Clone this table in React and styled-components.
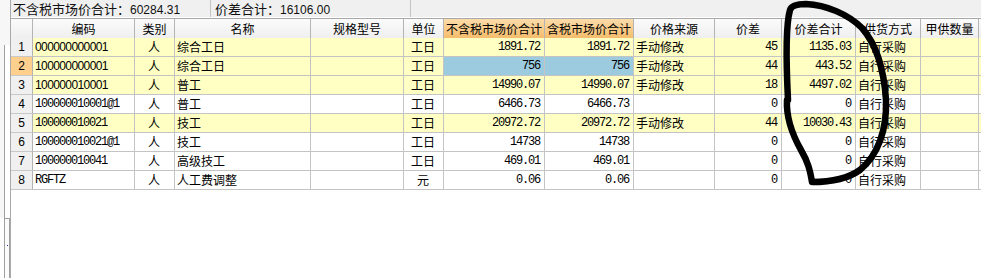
import styled, { createGlobalStyle, css } from "styled-components";

const GlobalStyle = createGlobalStyle`
  html, body {
    margin: 0;
    padding: 0;
    background: #ffffff;
  }
  body {
    font-family: "Noto Sans CJK SC", "Liberation Sans", sans-serif;
    font-size: 12px;
    color: #000;
  }
`;

const columns = [
  { key: "code", title: "编码", width: 102, align: "left" },
  { key: "kind", title: "类别", width: 40, align: "center" },
  { key: "name", title: "名称", width: 136, align: "left" },
  { key: "spec", title: "规格型号", width: 93, align: "left" },
  { key: "unit", title: "单位", width: 40, align: "center" },
  { key: "ex", title: "不含税市场价合计", width: 101, align: "right", num: true, accent: true },
  { key: "inc", title: "含税市场价合计", width: 89, align: "right", num: true, accent: true },
  { key: "src", title: "价格来源", width: 81, align: "left" },
  { key: "diff", title: "价差", width: 67, align: "right", num: true },
  { key: "diffSum", title: "价差合计", width: 74, align: "right", num: true },
  { key: "supply", title: "供货方式", width: 65, align: "left" },
  { key: "qty", title: "甲供数量", width: 58, align: "left" },
  { key: "rest", title: "", width: 40, align: "left" },
];

const rows = [
  { no: 1, code: "000000000001", sans: true, kind: "人", name: "综合工日", unit: "工日", ex: "1891.72", inc: "1891.72", src: "手动修改", diff: "45", diffSum: "1135.03", supply: "自行采购", hl: true },
  { no: 2, code: "100000000001", sans: true, kind: "人", name: "综合工日", unit: "工日", ex: "756", inc: "756", src: "手动修改", diff: "44", diffSum: "443.52", supply: "自行采购", hl: true, selected: true },
  { no: 3, code: "100000010001", sans: true, kind: "人", name: "普工", unit: "工日", ex: "14990.07", inc: "14990.07", src: "手动修改", diff: "18", diffSum: "4497.02", supply: "自行采购", hl: true },
  { no: 4, code: "100000010001@1", kind: "人", name: "普工", unit: "工日", ex: "6466.73", inc: "6466.73", src: "", diff: "0", diffSum: "0", supply: "自行采购" },
  { no: 5, code: "100000010021", kind: "人", name: "技工", unit: "工日", ex: "20972.72", inc: "20972.72", src: "手动修改", diff: "44", diffSum: "10030.43", supply: "自行采购", hl: true },
  { no: 6, code: "100000010021@1", kind: "人", name: "技工", unit: "工日", ex: "14738", inc: "14738", src: "", diff: "0", diffSum: "0", supply: "自行采购" },
  { no: 7, code: "100000010041", kind: "人", name: "高级技工", unit: "工日", ex: "469.01", inc: "469.01", src: "", diff: "0", diffSum: "0", supply: "自行采购" },
  { no: 8, code: "RGFTZ", kind: "人", name: "人工费调整", unit: "元", ex: "0.06", inc: "0.06", src: "", diff: "0", diffSum: "0", supply: "自行采购" },
];

const template = `22px ${columns.map((c) => `${c.width}px`).join(" ")}`;

const Page = styled.div`
  position: relative;
  width: 981px;
  height: 278px;
  overflow: hidden;
  display: flex;
  background: #fff;
`;

const LeftStrip = styled.div`
  width: 11px;
  flex: none;
  display: flex;
  flex-direction: column;
  border-right: 1px solid #a9a9a9;
  box-sizing: border-box;
`;

const StripTop = styled.div`
  height: 45px;
  background: #f7f7f7;
`;

const StripPanel = styled.div`
  width: 4px;
  height: 173px;
  border-right: 1px solid #a0a0a0;
  background: #f7f7f7;
`;

const ScrollNub = styled.div`
  flex: 1;
  margin-left: 4px;
  width: 6px;
  box-sizing: border-box;
  border: 1px solid #a0a0a0;
  border-bottom: none;
  background: #fcfcfc;
  display: flex;
  justify-content: center;
  padding-top: 26px;

  &::after {
    content: "";
    width: 1px;
    height: 1px;
    background: #2030a0;
  }
`;

const Main = styled.div`
  flex: 1;
  display: flex;
  flex-direction: column;
  min-width: 0;
`;

const TopBar = styled.div`
  height: 18px;
  display: flex;
  background: #f0f0f0;
  border-bottom: 1px solid #ffffff;
  box-sizing: border-box;
`;

const Field = styled.div`
  width: ${(p) => p.$w}px;
  flex: none;
  box-sizing: border-box;
  border-right: 1px solid #c4c4c4;
  padding-left: ${(p) => p.$pad}px;
  font-size: 13px;
  line-height: 17px;
  white-space: nowrap;
  color: #111;
`;

const Value = styled.span`
  font-family: "Liberation Sans", sans-serif;
  font-size: 12px;
`;

const Grid = styled.div`
  display: grid;
  grid-template-columns: ${template};
  grid-auto-rows: 19px;
  border-top: 1px solid #a8a8a8;
  width: max-content;
`;

const HeadCell = styled.div`
  height: 20px;
  box-sizing: border-box;
  border-right: 1px solid #b4b4b4;
  border-bottom: 1px solid #b4b4b4;
  background: ${(p) =>
    p.$accent
      ? "linear-gradient(#fcdcaa, #f5bd6c)"
      : "linear-gradient(#fbfbfb, #efefef)"};
  display: flex;
  align-items: center;
  justify-content: center;
  font-size: 12px;
  line-height: 1;
  white-space: nowrap;
  overflow: hidden;
`;

const NumCell = styled.div`
  box-sizing: border-box;
  border-right: 1px solid #b4b4b4;
  border-bottom: 1px solid #c8c8c8;
  background: ${(p) => (p.$selected ? "#ffcf8e" : "#f0f0f0")};
  display: flex;
  align-items: center;
  justify-content: center;
  font-family: "Liberation Sans", sans-serif;
  font-size: 12px;
`;

const Cell = styled.div`
  box-sizing: border-box;
  border-right: 1px solid #c4c4c4;
  border-bottom: 1px solid #c4c4c4;
  background: ${(p) => (p.$blue ? "#9ccbdf" : p.$hl ? "#ffffc4" : "#ffffff")};
  display: flex;
  align-items: center;
  justify-content: ${(p) =>
    p.$align === "right" ? "flex-end" : p.$align === "center" ? "center" : "flex-start"};
  padding: 0 3px 0 2px;
  font-size: 12px;
  line-height: 1;
  white-space: nowrap;
  overflow: hidden;
  ${(p) =>
    p.$num &&
    css`
      font-family: "Liberation Mono", monospace;
      letter-spacing: -1.2px;
      padding-right: 4px;
    `}
  ${(p) =>
    p.$code &&
    css`
      font-family: ${p.$sans ? `"Liberation Sans", sans-serif` : `"Liberation Mono", monospace`};
      letter-spacing: ${p.$sans ? "-0.6px" : "-1.2px"};
    `}
`;

const Mark = styled.svg`
  position: absolute;
  left: 0;
  top: 0;
  pointer-events: none;
`;

export default function App() {
  return (
    <>
      <GlobalStyle />
      <Page>
        <LeftStrip>
          <StripTop />
          <StripPanel />
          <ScrollNub />
        </LeftStrip>
        <Main>
          <TopBar>
            <Field $w={200} $pad={2}>
              不含税市场价合计：<Value>60284.31</Value>
            </Field>
            <Field $w={200} $pad={4}>
              价差合计：<Value>16106.00</Value>
            </Field>
          </TopBar>
          <Grid>
            <HeadCell />
            {columns.map((c) => (
              <HeadCell key={c.key} $accent={c.accent}>
                {c.title}
              </HeadCell>
            ))}
            {rows.map((r) => (
              <Row key={r.no} row={r} />
            ))}
          </Grid>
        </Main>
        <Mark width="981" height="278" viewBox="0 0 981 278">
          <path
            d="M788 100 C786 60 786 24 790 10 Q792 4 806 4 C826 5 848 14 862 28 C876 44 884 70 886 100 C887 130 878 155 860 170 C846 180 828 182 812 182 C810 170 808 162 801 150 C792 134 786 118 787 100"
            fill="none"
            stroke="#000"
            strokeWidth="6.5"
            strokeLinecap="round"
            strokeLinejoin="round"
          />
        </Mark>
      </Page>
    </>
  );
}

function Row({ row }) {
  return (
    <>
      <NumCell $selected={row.selected}>{row.no}</NumCell>
      {columns.map((c) => (
        <Cell
          key={c.key}
          $align={c.align}
          $num={c.num}
          $code={c.key === "code"}
          $sans={row.sans}
          $hl={row.hl}
          $blue={row.selected && c.accent}
        >
          {row[c.key] || ""}
        </Cell>
      ))}
    </>
  );
}
